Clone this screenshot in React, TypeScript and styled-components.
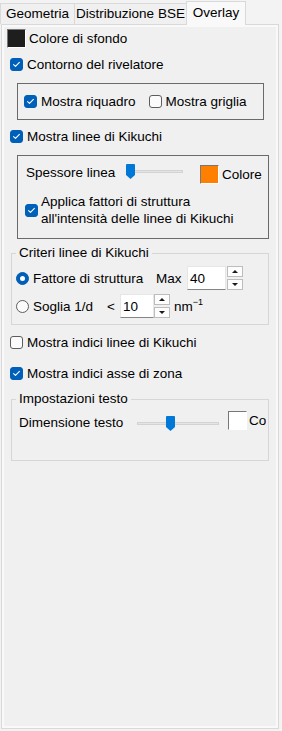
import * as React from 'react';
import styled, { createGlobalStyle } from 'styled-components';

const GlobalStyle = createGlobalStyle`
  html, body {
    margin: 0;
    padding: 0;
    background: #f3f3f3;
  }

  body {
    font-family: 'Segoe UI', 'Liberation Sans', Arial, sans-serif;
    font-size: 13.5px;
    color: #000;
  }

  * {
    box-sizing: border-box;
  }
`;

const Window = styled.div`
  display: flex;
  flex-direction: column;
  width: 282px;
  height: 731px;
  padding: 0 3px 2px 1px;
`;

const TabBar = styled.div`
  display: flex;
  align-items: flex-end;
  height: 24px;
  margin-left: -1px;
`;

const Tab = styled.div<{ $w: number; $active?: boolean }>`
  position: relative;
  z-index: ${p => (p.$active ? 1 : 0)};
  display: flex;
  align-items: center;
  justify-content: center;
  width: ${p => p.$w}px;
  height: ${p => (p.$active ? 24 : 21)}px;
  margin-bottom: ${p => (p.$active ? -1 : 0)}px;
  margin-left: -1px;
  padding-bottom: ${p => (p.$active ? 2 : 0)}px;
  border: 1px solid #d9d9d9;
  border-bottom: 0;
  background: ${p => (p.$active ? '#f9f9f9' : '#f0f0f0')};
  line-height: 1;
  white-space: nowrap;

  &:first-child {
    margin-left: 0;
  }
`;

const Pane = styled.div`
  flex: 1;
  display: flex;
  padding: 2px;
  border: 1px solid #d9d9d9;
  background: #f9f9f9;
`;

const Content = styled.div`
  flex: 1;
  display: flex;
  flex-direction: column;
  align-items: flex-start;
  padding: 2px 0 0 3px;
  background: #f0f0f0;
`;

const Row = styled.div<{ $top?: number; $left?: number; $h?: number; $align?: string }>`
  display: flex;
  align-items: ${p => p.$align ?? 'center'};
  height: ${p => (p.$h ? `${p.$h}px` : 'auto')};
  margin-top: ${p => p.$top ?? 0}px;
  padding-left: ${p => p.$left ?? 0}px;
  white-space: nowrap;
`;

const Text = styled.span<{ $w?: number; $gap?: number; $top?: number }>`
  display: inline-block;
  flex: none;
  width: ${p => (p.$w ? `${p.$w}px` : 'auto')};
  margin-left: ${p => p.$gap ?? 0}px;
  margin-top: ${p => p.$top ?? 0}px;
  line-height: 19px;
`;

const Swatch = styled.span<{ $color: string; $gap?: number; $top?: number }>`
  flex: none;
  width: 19px;
  height: 19px;
  margin-left: ${p => p.$gap ?? 0}px;
  margin-top: ${p => p.$top ?? 0}px;
  border: 1px solid;
  border-color: #777 #fff #fff #777;
  background: ${p => p.$color};
`;

const Box = styled.span<{ $checked: boolean }>`
  display: inline-flex;
  flex: none;
  align-items: center;
  justify-content: center;
  width: 13px;
  height: 13px;
  border: 1px solid ${p => (p.$checked ? '#005fb8' : '#5d5d5d')};
  border-radius: 3px;
  background: ${p => (p.$checked ? '#005fb8' : '#fbfbfb')};

  svg {
    width: 11px;
    height: 11px;
  }
`;

const Option = styled.label<{ $gap?: number; $w?: number }>`
  display: flex;
  flex: none;
  align-items: center;
  gap: 4px;
  width: ${p => (p.$w ? `${p.$w}px` : 'auto')};
  margin-left: ${p => p.$gap ?? 0}px;
`;

const MultiLine = styled.span`
  display: block;
  margin-left: -1px;
  line-height: 17px;
  white-space: normal;
`;

const Frame = styled.div<{ $top: number; $w: number; $h: number }>`
  display: flex;
  flex-direction: column;
  width: ${p => p.$w}px;
  height: ${p => p.$h}px;
  margin-top: ${p => p.$top}px;
  margin-left: 10px;
  border: 1px solid #6a6a6a;
`;

const Group = styled.fieldset<{ $top: number }>`
  width: 258px;
  min-width: 0;
  margin: ${p => p.$top}px 0 0 4px;
  padding: 0;
  border: 1px solid #d6d6d6;
`;

const Legend = styled.legend`
  margin-left: 4px;
  padding: 0 3px;
  line-height: 18px;
`;

const GroupBody = styled.div<{ $pad: string }>`
  display: flex;
  flex-direction: column;
  padding: ${p => p.$pad};
`;

const ClipRow = styled.div`
  display: flex;
  align-items: flex-start;
  height: 20px;
  margin-right: 2px;
  padding-left: 7px;
  overflow: hidden;
  white-space: nowrap;
`;

const Radio = styled.span<{ $checked: boolean }>`
  display: inline-flex;
  flex: none;
  align-items: center;
  justify-content: center;
  width: 13px;
  height: 13px;
  border: 1px solid ${p => (p.$checked ? '#005fb8' : '#5d5d5d')};
  border-radius: 50%;
  background: ${p => (p.$checked ? '#005fb8' : '#fbfbfb')};

  &::after {
    content: '';
    display: ${p => (p.$checked ? 'block' : 'none')};
    width: 5px;
    height: 5px;
    border-radius: 50%;
    background: #fff;
  }
`;

const Spin = styled.div<{ $gap: number }>`
  display: flex;
  flex: none;
  gap: ${p => p.$gap}px;
  height: 24px;
`;

const SpinField = styled.div<{ $w: number }>`
  display: flex;
  align-items: center;
  width: ${p => p.$w}px;
  padding-left: 2px;
  border: 1px solid #e6e6e6;
  border-bottom-color: #858585;
  background: #fff;
`;

const SpinButtons = styled.div`
  display: flex;
  flex-direction: column;
  justify-content: space-between;
  width: 16px;
`;

const SpinButton = styled.span<{ $down?: boolean }>`
  display: flex;
  align-items: center;
  justify-content: center;
  height: 11px;
  border: 1px solid #bdbdbd;
  background: #fdfdfd;

  &::after {
    content: '';
    width: 0;
    height: 0;
    border-left: 3px solid transparent;
    border-right: 3px solid transparent;
    ${p =>
      p.$down ? 'border-top: 3px solid #1a1a1a;' : 'border-bottom: 3px solid #1a1a1a;'}
  }
`;

const Sup = styled.sup`
  font-size: 9px;
  line-height: 0;
  vertical-align: 6px;
`;

const SliderTrack = styled.div<{ $w: number; $top?: number }>`
  position: relative;
  flex: none;
  width: ${p => p.$w}px;
  height: 15px;
  margin-top: ${p => p.$top ?? 0}px;
`;

const Groove = styled.div`
  position: absolute;
  top: 6px;
  left: 0;
  right: 0;
  height: 3px;
  border: 1px solid #d3d3d3;
  background: #e4e4e4;
`;

const Handle = styled.svg`
  position: absolute;
  top: 0;
  width: 9px;
  height: 15px;
`;

const Check = () => (
  <svg viewBox="0 0 11 11">
    <polyline
      points="2.6,5.6 4.5,7.4 8.4,3.4"
      fill="none"
      stroke="#fff"
      strokeWidth="1.1"
      strokeLinecap="round"
      strokeLinejoin="round"
    />
  </svg>
);

const CheckBox = ({ checked }: { checked: boolean }) => (
  <Box $checked={checked}>{checked ? <Check /> : null}</Box>
);

const Slider = ({ width, value, top }: { width: number; value: number; top?: number }) => (
  <SliderTrack $w={width} $top={top}>
    <Groove />
    <Handle viewBox="0 0 9 15" style={{ left: Math.round((width - 9) * value) }}>
      <path d="M1 0H8Q9 0 9 1V11L4.5 15L0 11V1Q0 0 1 0Z" fill="#0078d7" />
    </Handle>
  </SliderTrack>
);

const SpinBox = ({ value, width, gap }: { value: string; width: number; gap: number }) => (
  <Spin $gap={gap}>
    <SpinField $w={width}>{value}</SpinField>
    <SpinButtons>
      <SpinButton />
      <SpinButton $down />
    </SpinButtons>
  </Spin>
);

export default function App() {
  return (
    <>
      <GlobalStyle />
      <Window>
        <TabBar>
          <Tab $w={75}>Geometria</Tab>
          <Tab $w={113}>Distribuzione BSE</Tab>
          <Tab $w={60} $active>
            Overlay
          </Tab>
        </TabBar>
        <Pane>
          <Content>
            <Row $h={19}>
              <Swatch $color="#1e1e1e" />
              <Text $gap={3}>Colore di sfondo</Text>
            </Row>

            <Row $top={7} $h={19} $left={3}>
              <Option>
                <CheckBox checked />
                Contorno del rivelatore
              </Option>
            </Row>

            <Frame $top={9} $w={247} $h={37}>
              <Row $h={35} $left={6}>
                <Option>
                  <CheckBox checked />
                  Mostra riquadro
                </Option>
                <Option $gap={13}>
                  <CheckBox checked={false} />
                  Mostra griglia
                </Option>
              </Row>
            </Frame>

            <Row $top={7} $h={19} $left={3}>
              <Option>
                <CheckBox checked />
                Mostra linee di Kikuchi
              </Option>
            </Row>

            <Frame $top={9} $w={252} $h={84}>
              <Row $top={7} $h={21} $left={8} $align="flex-start">
                <Text $w={100}>Spessore linea</Text>
                <Slider width={57} value={0} top={1} />
                <Swatch $color="#ff8000" $gap={17} $top={2} />
                <Text $gap={3} $top={2}>
                  Colore
                </Text>
              </Row>
              <Row $top={9} $left={7}>
                <Option>
                  <CheckBox checked />
                  <MultiLine>
                    Applica fattori di struttura
                    <br />
                    all'intensità delle linee di Kikuchi
                  </MultiLine>
                </Option>
              </Row>
            </Frame>

            <Group $top={5}>
              <Legend>Criteri linee di Kikuchi</Legend>
              <GroupBody $pad="4px 0 6px 4px">
                <Row $h={24}>
                  <Option $w={140}>
                    <Radio $checked />
                    Fattore di struttura
                  </Option>
                  <Text $w={31}>Max</Text>
                  <SpinBox value="40" width={39} gap={1} />
                </Row>
                <Row $top={4} $h={24}>
                  <Option $w={91}>
                    <Radio $checked={false} />
                    Soglia 1/d
                  </Option>
                  <Text $w={13}>&lt;</Text>
                  <SpinBox value="10" width={34} gap={0} />
                  <Text $gap={4}>
                    nm<Sup>−1</Sup>
                  </Text>
                </Row>
              </GroupBody>
            </Group>

            <Row $top={8} $h={19} $left={3}>
              <Option>
                <CheckBox checked={false} />
                Mostra indici linee di Kikuchi
              </Option>
            </Row>

            <Row $top={12} $h={19} $left={3}>
              <Option>
                <CheckBox checked />
                Mostra indici asse di zona
              </Option>
            </Row>

            <Group $top={7}>
              <Legend>Impostazioni testo</Legend>
              <GroupBody $pad="3px 0 29px 0">
                <ClipRow>
                  <Text $w={118} $top={2}>
                    Dimensione testo
                  </Text>
                  <Slider width={82} value={0.4} top={5} />
                  <Swatch $color="#ffffff" $gap={9} />
                  <Text $gap={2} $top={0}>
                    Colore
                  </Text>
                </ClipRow>
              </GroupBody>
            </Group>
          </Content>
        </Pane>
      </Window>
    </>
  );
}
